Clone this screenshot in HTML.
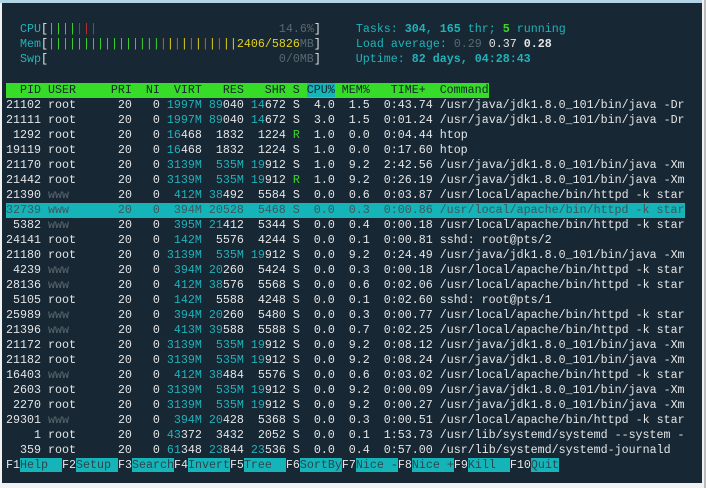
<!DOCTYPE html>
<html><head><meta charset="utf-8"><style>
html,body{margin:0;padding:0;background:#f2f2f2;width:706px;height:488px;overflow:hidden}
.top{position:absolute;left:0;top:0;width:702px;height:3px;background:#b3d4e4}
.rb{position:absolute;left:704px;top:0;width:2px;height:488px;background:#bbb}
.term{position:absolute;left:2px;top:3px;width:700px;height:480px;background:#172733}
pre{margin:0;position:absolute;left:6px;font-family:"Liberation Mono","DejaVu Sans Mono",monospace;font-size:11.67px;line-height:15px;color:#e4e6e8;white-space:pre}
.c{color:#1fb3bb}.g{color:#5b6870}.G{color:#3bd72c}.r{color:#c0302a}.y{color:#e2d21c}.o{color:#c8661a}
.b{font-weight:bold}
.hd{background:#37dc28;color:#15252e;display:inline-block;width:483px}
.hc{background:#14b4b8}
.sel{background:#14b4b8;color:#3f5660;display:inline-block;width:679px}
.sel span{color:#3f5660}
.k{background:#14b4b8;color:#2d4650}
</style></head><body>
<div class="top"></div><div class="rb"></div>
<div class="term"></div>
<pre style="top:22px">  <span class="c">CPU</span>[<span class="G">||||</span><span class="r">|||</span>                          <span class="g">14.6%</span>]     <span class="c">Tasks: <b>304</b>, <b>165</b> thr; </span><span class="G b">5</span><span class="c"> running</span>
  <span class="c">Mem</span>[<span class="G">||||||||||||||||</span><span class="o">|</span><span class="y">|</span><span class="o">|</span><span class="y">|</span><span class="o">|</span><span class="y">|</span><span class="o">|</span><span class="y">|</span><span class="o">|</span><span class="y">|</span><span class="y">|</span><span class="y">2406/5826</span><span class="g">MB</span>]     <span class="c">Load average: </span><span class="g">0.29</span> 0.37 <b>0.28</b>
  <span class="c">Swp</span>[                                 <span class="g">0/0MB</span>]     <span class="c">Uptime: <b>82 days, 04:28:43</b></span></pre>
<pre style="top:83px"><span class="hd">  PID USER     PRI  NI  VIRT   RES   SHR S <span class="hc">CPU%</span> MEM%   TIME+  Command</span>
21102 root      20   0 <span class="c">1997M</span> <span class="c">89</span>040 <span class="c">14</span>672 S  4.0  1.5  0:43.74 /usr/java/jdk1.8.0_101/bin/java -Dr
21111 root      20   0 <span class="c">1997M</span> <span class="c">89</span>040 <span class="c">14</span>672 S  3.0  1.5  0:01.24 /usr/java/jdk1.8.0_101/bin/java -Dr
 1292 root      20   0 <span class="c">16</span>468  1832  1224 <span class="G">R</span>  1.0  0.0  0:04.44 htop
19119 root      20   0 <span class="c">16</span>468  1832  1224 S  1.0  0.0  0:17.60 htop
21170 root      20   0 <span class="c">3139M</span>  <span class="c">535M</span> <span class="c">19</span>912 S  1.0  9.2  2:42.56 /usr/java/jdk1.8.0_101/bin/java -Xm
21442 root      20   0 <span class="c">3139M</span>  <span class="c">535M</span> <span class="c">19</span>912 <span class="G">R</span>  1.0  9.2  0:26.19 /usr/java/jdk1.8.0_101/bin/java -Xm
21390 <span class="g">www</span>       20   0  <span class="c">412M</span> <span class="c">38</span>492  5584 S  0.0  0.6  0:03.87 /usr/local/apache/bin/httpd -k star
<span class="sel">32739 www       20   0  394M 20528  5468 S  0.0  0.3  0:00.86 /usr/local/apache/bin/httpd -k star</span>
 5382 <span class="g">www</span>       20   0  <span class="c">395M</span> <span class="c">21</span>412  5344 S  0.0  0.4  0:00.18 /usr/local/apache/bin/httpd -k star
24141 root      20   0  <span class="c">142M</span>  5576  4244 S  0.0  0.1  0:00.81 sshd: root@pts/2
21180 root      20   0 <span class="c">3139M</span>  <span class="c">535M</span> <span class="c">19</span>912 S  0.0  9.2  0:24.49 /usr/java/jdk1.8.0_101/bin/java -Xm
 4239 <span class="g">www</span>       20   0  <span class="c">394M</span> <span class="c">20</span>260  5424 S  0.0  0.3  0:00.18 /usr/local/apache/bin/httpd -k star
28136 <span class="g">www</span>       20   0  <span class="c">412M</span> <span class="c">38</span>576  5568 S  0.0  0.6  0:02.06 /usr/local/apache/bin/httpd -k star
 5105 root      20   0  <span class="c">142M</span>  5588  4248 S  0.0  0.1  0:02.60 sshd: root@pts/1
25989 <span class="g">www</span>       20   0  <span class="c">394M</span> <span class="c">20</span>260  5480 S  0.0  0.3  0:00.77 /usr/local/apache/bin/httpd -k star
21396 <span class="g">www</span>       20   0  <span class="c">413M</span> <span class="c">39</span>588  5588 S  0.0  0.7  0:02.25 /usr/local/apache/bin/httpd -k star
21172 root      20   0 <span class="c">3139M</span>  <span class="c">535M</span> <span class="c">19</span>912 S  0.0  9.2  0:08.12 /usr/java/jdk1.8.0_101/bin/java -Xm
21182 root      20   0 <span class="c">3139M</span>  <span class="c">535M</span> <span class="c">19</span>912 S  0.0  9.2  0:08.24 /usr/java/jdk1.8.0_101/bin/java -Xm
16403 <span class="g">www</span>       20   0  <span class="c">412M</span> <span class="c">38</span>484  5576 S  0.0  0.6  0:03.02 /usr/local/apache/bin/httpd -k star
 2603 root      20   0 <span class="c">3139M</span>  <span class="c">535M</span> <span class="c">19</span>912 S  0.0  9.2  0:00.09 /usr/java/jdk1.8.0_101/bin/java -Xm
 2270 root      20   0 <span class="c">3139M</span>  <span class="c">535M</span> <span class="c">19</span>912 S  0.0  9.2  0:00.27 /usr/java/jdk1.8.0_101/bin/java -Xm
29301 <span class="g">www</span>       20   0  <span class="c">394M</span> <span class="c">20</span>428  5368 S  0.0  0.3  0:00.51 /usr/local/apache/bin/httpd -k star
    1 root      20   0 <span class="c">43</span>372  3432  2052 S  0.0  0.1  1:53.73 /usr/lib/systemd/systemd --system -
  359 root      20   0 <span class="c">61</span>348 <span class="c">23</span>844 <span class="c">23</span>536 S  0.0  0.4  0:57.00 /usr/lib/systemd/systemd-journald
F1<span class="k">Help  </span>F2<span class="k">Setup </span>F3<span class="k">Search</span>F4<span class="k">Invert</span>F5<span class="k">Tree  </span>F6<span class="k">SortBy</span>F7<span class="k">Nice -</span>F8<span class="k">Nice +</span>F9<span class="k">Kill  </span>F10<span class="k">Quit</span></pre>
</body></html>
